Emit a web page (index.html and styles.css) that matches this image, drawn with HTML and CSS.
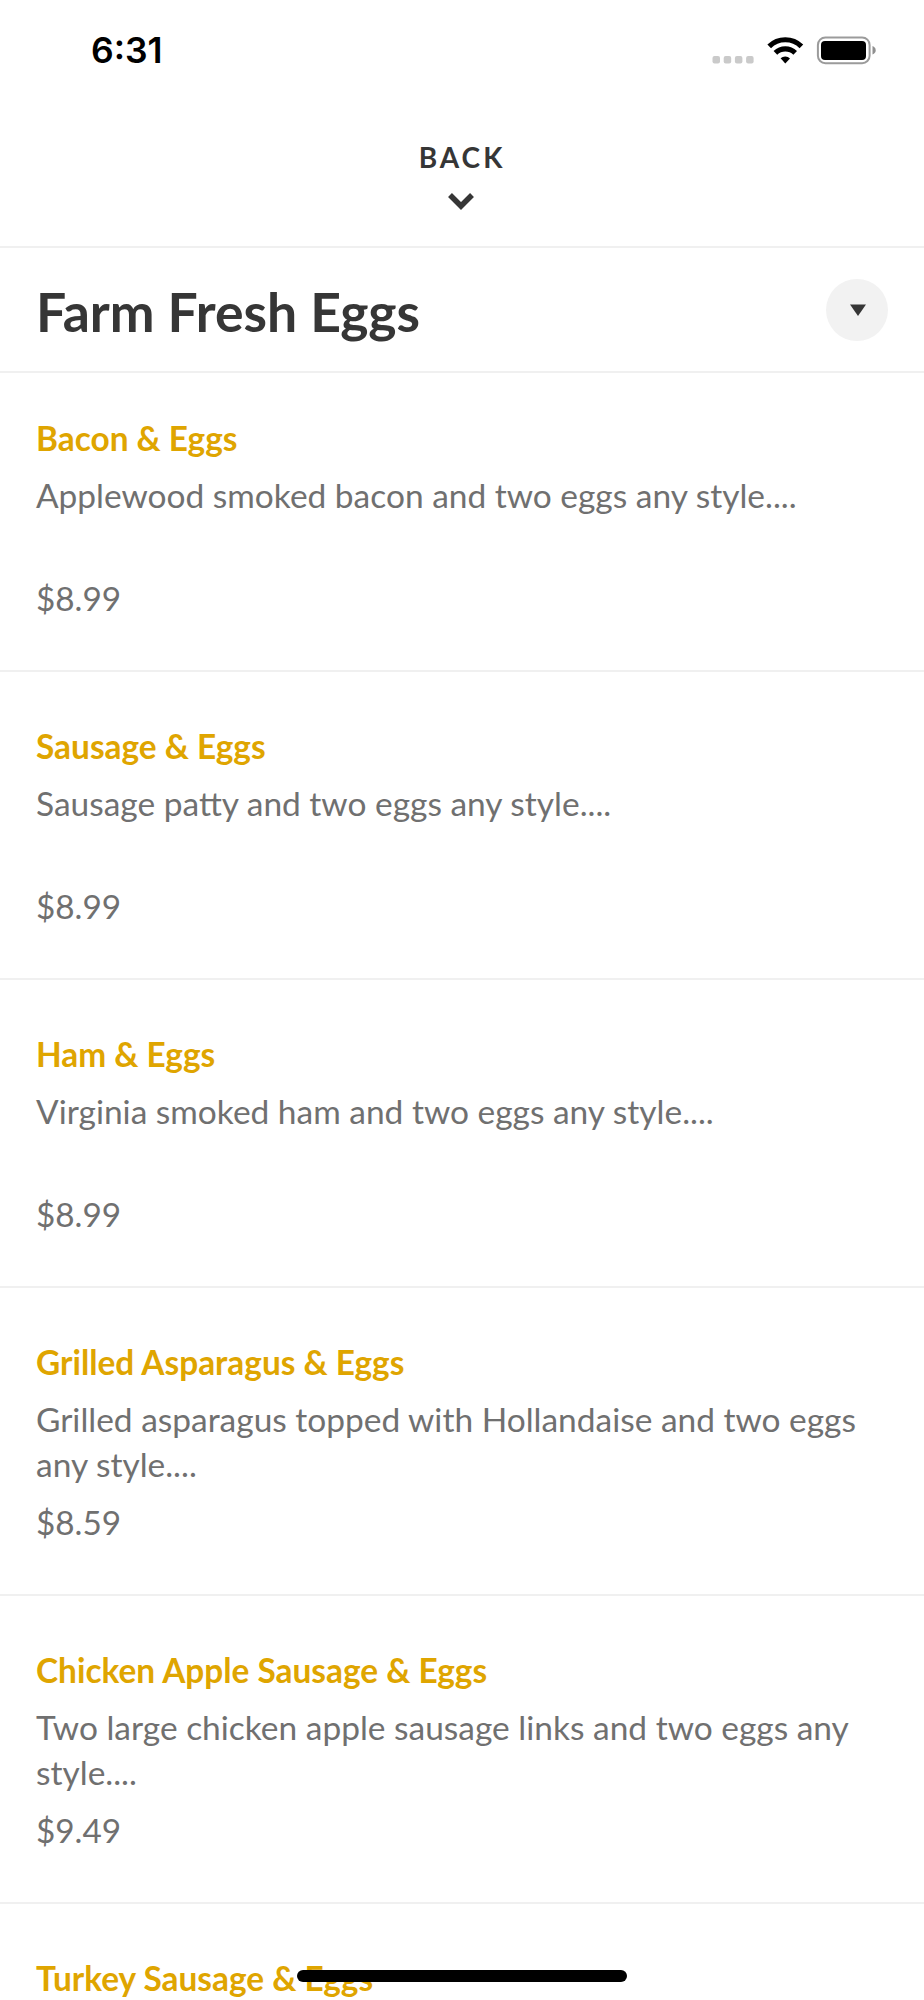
FILE: index.html
```html
<!DOCTYPE html>
<html lang="en">
<head>
    <meta charset="UTF-8">
    <meta name="viewport" content="width=device-width, initial-scale=1.0">
    <title>Farm Fresh Eggs</title>
    <link rel="stylesheet" href="styles.css">
</head>
<body>

    <div class="screen">
        <div class="status-bar">
            <span class="time">6:31</span>
            <svg class="status-icons" width="170" height="40" viewBox="0 0 170 40">
                <!-- signal -->
                <g fill="#cacaca">
                    <rect x="2.500" y="26" width="7.500" height="7.500" rx="2"/>
                    <rect x="13.700" y="26" width="7.500" height="7.500" rx="2"/>
                    <rect x="24.900" y="26" width="7.500" height="7.500" rx="2"/>
                    <rect x="36.100" y="26" width="7.500" height="7.500" rx="2"/>
                </g>
                <!-- wifi -->
                <g fill="none" stroke="#000" stroke-width="5.200">
                    <path d="M59.200 16.300a23 23 0 0 1 32.200 0"/>
                    <path d="M65.400 22.800a14.200 14.200 0 0 1 19.800 0"/>
                </g>
                <path d="M70.600 28.200a7.200 7.200 0 0 1 9.400 0.300l-4.700 5z"/>
                <!-- battery -->
                <rect x="107.900" y="7.400" width="51.700" height="25.800" rx="7.500" fill="none" stroke="#9b9b9b" stroke-width="2"/>
                <rect x="111" y="11" width="45" height="19" rx="4"/>
                <path d="M162.500 16q3.200 1.200 3.200 4.200t-3.200 4.200z" fill="#8f8f8f"/>
            </svg>
        </div>

        <div class="back">
            <span class="back-label">BACK</span>
            <svg class="chevron" width="26" height="18" viewBox="0 0 26 18">
                <path d="M2 3l11 11L24 3" fill="none" stroke="#363636" stroke-width="5.500"/>
            </svg>
        </div>

        <div class="category">
            <h1>Farm Fresh Eggs</h1>
            <button class="toggle">
                <svg width="16" height="12" viewBox="0 0 16 12"><path d="M0 0.500h16L8 12z" fill="#363636"/></svg>
            </button>
        </div>

        <ul class="menu">
            <li class="item">
                <h2>Bacon &amp; Eggs</h2>
                <p class="desc">Applewood smoked bacon and two eggs any style....</p>
                <p class="price">$8.99</p>
            </li>
            <li class="item">
                <h2>Sausage &amp; Eggs</h2>
                <p class="desc">Sausage patty and two eggs any style....</p>
                <p class="price">$8.99</p>
            </li>
            <li class="item">
                <h2>Ham &amp; Eggs</h2>
                <p class="desc">Virginia smoked ham and two eggs any style....</p>
                <p class="price">$8.99</p>
            </li>
            <li class="item">
                <h2>Grilled Asparagus &amp; Eggs</h2>
                <p class="desc">Grilled asparagus topped with Hollandaise and two eggs any style....</p>
                <p class="price">$8.59</p>
            </li>
            <li class="item">
                <h2>Chicken Apple Sausage &amp; Eggs</h2>
                <p class="desc">Two large chicken apple sausage links and two eggs any style....</p>
                <p class="price">$9.49</p>
            </li>
            <li class="item">
                <h2>Turkey Sausage &amp; Eggs</h2>
            </li>
        </ul>

        <div class="home-indicator"></div>
    </div>

</body>
</html>
```

FILE: styles.css
```css
* {
    box-sizing: border-box;
    margin: 0;
    padding: 0;
}

body {
    font-family: Lato, sans-serif;
    background: #fff;
    color: #363636;
}

.screen {
    position: relative;
    height: 2000px;
    overflow: hidden;
}

.status-bar {
    height: 100px;
    padding: 0 44px 0 91px;
    display: flex;
    align-items: center;
    justify-content: space-between;
}

.time {
    padding-top: 1px;
    font-family: Inter, sans-serif;
    font-size: 35.5px;
    font-weight: 600;
    color: #000;
}

.back {
    height: 148px;
    padding-top: 40px;
    display: flex;
    flex-direction: column;
    align-items: center;
    border-bottom: 2px solid #f0f0f0;
}

.back-label {
    font-size: 28px;
    line-height: 34px;
    font-weight: 700;
    letter-spacing: 3px;
}

.chevron {
    margin-top: 18px;
    margin-right: 3px;
}

.category {
    height: 125px;
    padding: 0 36px;
    display: flex;
    align-items: center;
    justify-content: space-between;
    border-bottom: 2px solid #f0f0f0;
}

.category h1 {
    padding-top: 2px;
    font-size: 53.5px;
    font-weight: 700;
}

.toggle {
    width: 62px;
    height: 62px;
    padding: 1px 0 0 2px;
    border: none;
    border-radius: 50%;
    background: #f2f2f2;
    display: flex;
    align-items: center;
    justify-content: center;
}

.menu {
    list-style: none;
}

.item {
    height: 308px;
    padding: 52px 36px 0;
    border-bottom: 2px solid #f0f0f0;
}

.item:first-child {
    height: 299px;
    padding-top: 43px;
}

.item h2 {
    font-size: 33.4px;
    line-height: 45px;
    font-weight: 700;
    color: #dfa500;
}

.desc {
    height: 90px;
    margin-top: 12px;
    font-size: 33.47px;
    line-height: 45px;
    color: #707070;
}

.price {
    margin-top: 13px;
    font-size: 33.3px;
    line-height: 45px;
    color: #707070;
}

.home-indicator {
    position: absolute;
    left: 297px;
    bottom: 18px;
    width: 330px;
    height: 12px;
    border-radius: 6px;
    background: #000;
}
```
